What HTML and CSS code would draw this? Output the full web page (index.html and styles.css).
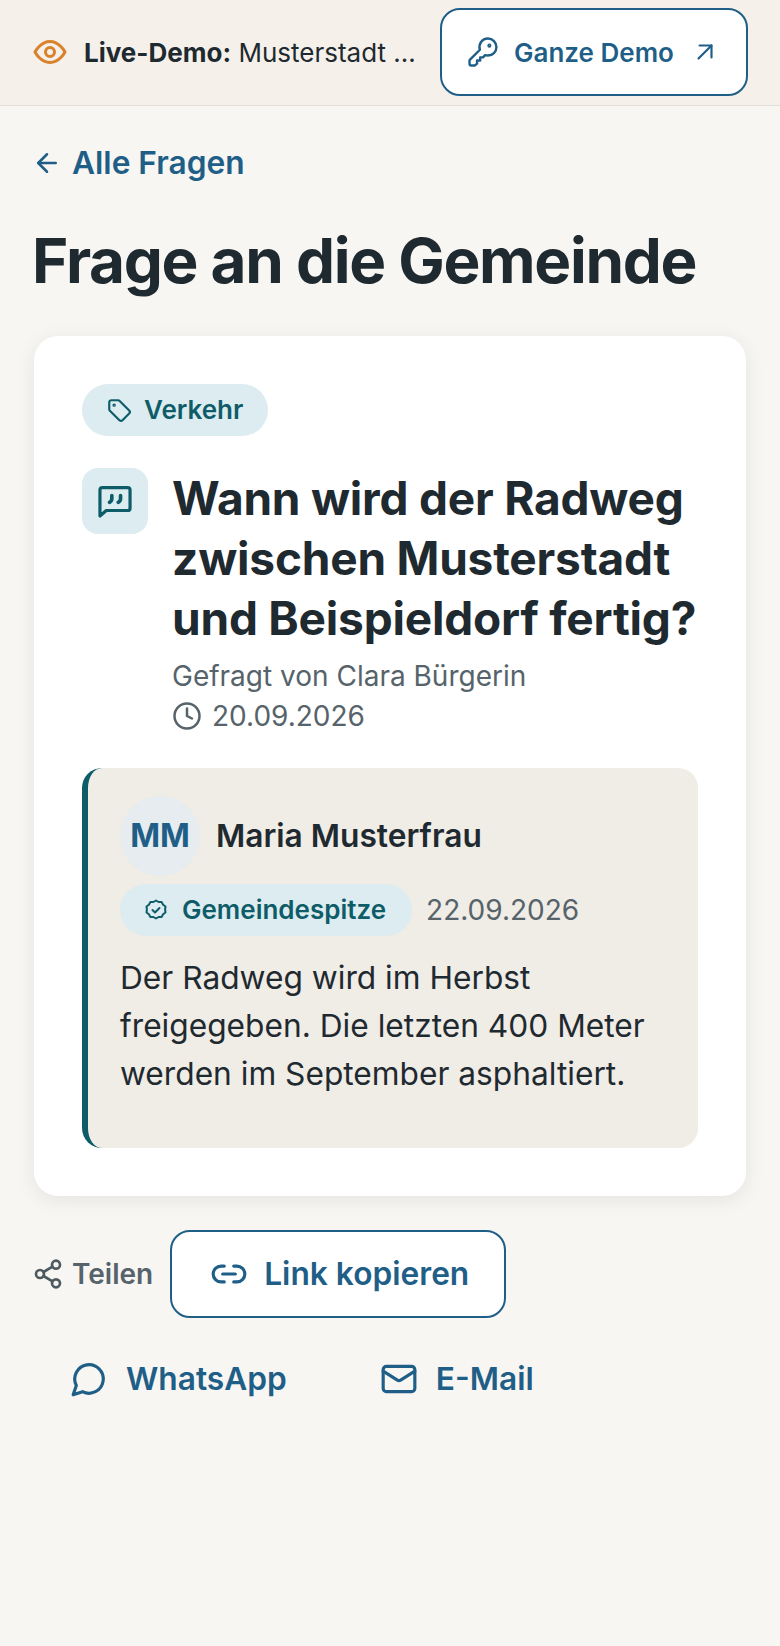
FILE: index.html
```html
<!DOCTYPE html>
<html lang="de">
<head>
    <meta charset="UTF-8">
    <meta name="viewport" content="width=device-width, initial-scale=1.0">
    <title>Frage an die Gemeinde</title>
    <link rel="stylesheet" href="styles.css">
</head>
<body>
    <div class="demo-bar">
        <div class="demo-info">
            <svg class="demo-eye" viewBox="0 0 24 24" fill="none" stroke="currentColor" stroke-width="2" stroke-linecap="round" stroke-linejoin="round">
                <path d="M2 12s3.600-7 10-7 10 7 10 7-3.600 7-10 7-10-7-10-7z"/>
                <circle cx="12" cy="12" r="3"/>
            </svg>
            <span class="demo-text"><strong>Live-Demo:</strong> Musterstadt ...</span>
        </div>
        <a class="btn demo-btn" href="#">
            <svg class="icon-key" viewBox="0 0 24 24" fill="none" stroke="currentColor" stroke-width="1.700" stroke-linecap="round" stroke-linejoin="round">
                <path d="M15.500 2.500a6 6 0 0 1 6 6c0 3.300-2.700 6-6 6-.7 0-1.400-.1-2-.3L12 15.800h-2v2.200H7.800v2.200L6.300 21.500H3.500a1 1 0 0 1-1-1v-2.800l7.300-7.300a6 6 0 0 1 5.700-7.900z"/>
                <circle cx="16.500" cy="7.500" r=".6"/>
            </svg>
            <span>Ganze Demo</span>
            <svg class="icon-out" viewBox="0 0 24 24" fill="none" stroke="currentColor" stroke-width="2" stroke-linecap="round" stroke-linejoin="round">
                <path d="M6 18 18 6"/>
                <path d="M7 6h11v11"/>
            </svg>
        </a>
    </div>

    <main class="page">
        <a class="back-link" href="#">
            <svg viewBox="0 0 24 24" fill="none" stroke="currentColor" stroke-width="2" stroke-linecap="round" stroke-linejoin="round">
                <path d="M19 12H5"/>
                <path d="m12 19-7-7 7-7"/>
            </svg>
            Alle Fragen
        </a>

        <h1>Frage an die Gemeinde</h1>

        <section class="card">
            <span class="chip chip-topic">
                <svg viewBox="0 0 24 24" fill="none" stroke="currentColor" stroke-width="2" stroke-linecap="round" stroke-linejoin="round">
                    <path d="M3 5v6.200c0 .5.2 1 .6 1.400l8.800 8.800c.8.8 2 .8 2.800 0l6.200-6.200c.8-.8.8-2 0-2.800l-8.800-8.800c-.4-.4-.9-.6-1.400-.6H5a2 2 0 0 0-2 2z"/>
                    <circle cx="7.500" cy="7.500" r=".6"/>
                </svg>
                Verkehr
            </span>

            <div class="question">
                <div class="question-icon">
                    <svg viewBox="0 0 24 24" fill="none" stroke="currentColor" stroke-width="2" stroke-linecap="round" stroke-linejoin="round">
                        <path d="M2.500 21.500V5a1.500 1.500 0 0 1 1.500-1.500h16A1.500 1.500 0 0 1 21.500 5v11.500a1.500 1.500 0 0 1-1.500 1.500H6.500z"/>
                        <path d="M10 8.500v2c0 1-.5 1.800-1.500 2.300" stroke-width="2.300"/>
                        <path d="M15.500 8.500v2c0 1-.5 1.800-1.500 2.300" stroke-width="2.300"/>
                    </svg>
                </div>
                <div class="question-body">
                    <h2>Wann wird der Radweg zwischen Musterstadt und Beispieldorf fertig?</h2>
                    <div class="question-meta">Gefragt von Clara Bürgerin</div>
                    <div class="question-meta question-date">
                        <svg viewBox="0 0 24 24" fill="none" stroke="currentColor" stroke-width="2" stroke-linecap="round" stroke-linejoin="round">
                            <circle cx="12" cy="12" r="10"/>
                            <path d="M12 6v6l4 2"/>
                        </svg>
                        20.09.2026
                    </div>
                </div>
            </div>

            <div class="answer">
                <div class="answer-head">
                    <div class="avatar">MM</div>
                    <div class="answer-name">Maria Musterfrau</div>
                </div>
                <div class="answer-role">
                    <span class="chip chip-role">
                        <svg viewBox="0 0 24 24" fill="none" stroke="currentColor" stroke-width="2" stroke-linecap="round" stroke-linejoin="round">
                            <path d="M12 2.500l2.600 1.500 3 .1 1.500 2.600 2.400 1.800-.4 3 .4 3-2.400 1.800-1.500 2.600-3 .1-2.600 1.500-2.600-1.500-3-.1-1.500-2.600-2.400-1.800.4-3-.4-3 2.400-1.800 1.500-2.600 3-.1z"/>
                            <path d="m8.500 12 2.500 2.500 4.500-4.500"/>
                        </svg>
                        Gemeindespitze
                    </span>
                    <span class="answer-date">22.09.2026</span>
                </div>
                <p>Der Radweg wird im Herbst freigegeben. Die letzten 400 Meter werden im September asphaltiert.</p>
            </div>
        </section>

        <div class="share-row">
            <span class="share-label">
                <svg viewBox="0 0 24 24" fill="none" stroke="currentColor" stroke-width="2" stroke-linecap="round" stroke-linejoin="round">
                    <circle cx="18" cy="5" r="3"/>
                    <circle cx="6" cy="12" r="3"/>
                    <circle cx="18" cy="19" r="3"/>
                    <path d="m8.600 13.500 6.800 4"/>
                    <path d="m15.400 6.500-6.800 4"/>
                </svg>
                Teilen
            </span>
            <a class="btn link-btn" href="#">
                <svg viewBox="0 0 24 24" fill="none" stroke="currentColor" stroke-width="2" stroke-linecap="round" stroke-linejoin="round">
                    <path d="M9 17H7A5 5 0 0 1 7 7h2"/>
                    <path d="M15 7h2a5 5 0 0 1 0 10h-2"/>
                    <path d="M8 12h8"/>
                </svg>
                Link kopieren
            </a>
        </div>

        <div class="share-links">
            <a class="share-link" href="#">
                <svg viewBox="0 0 24 24" fill="none" stroke="currentColor" stroke-width="2" stroke-linecap="round" stroke-linejoin="round">
                    <path d="M7.900 20A9 9 0 1 0 4 16.100L2 22z"/>
                </svg>
                WhatsApp
            </a>
            <a class="share-link" href="#">
                <svg viewBox="0 0 24 24" fill="none" stroke="currentColor" stroke-width="2" stroke-linecap="round" stroke-linejoin="round">
                    <rect x="2" y="4" width="20" height="16" rx="2"/>
                    <path d="m22 7-8.970 5.700a1.940 1.940 0 0 1-2.060 0L2 7"/>
                </svg>
                E-Mail
            </a>
        </div>
    </main>
</body>
</html>
```

FILE: styles.css
```css
* {
    box-sizing: border-box;
}
body {
    font-family: Inter, "Noto Sans", sans-serif;
    margin: 0;
    background-color: #f8f6f3;
    color: #1f2a30;
}
a {
    text-decoration: none;
    color: #1f5f87;
}
svg {
    flex-shrink: 0;
    display: block;
}
.demo-bar {
    display: flex;
    align-items: center;
    justify-content: space-between;
    height: 106px;
    padding: 8px 32px 9px 32px;
    background-color: #f5f0ea;
    border-bottom: 1px solid #e3e0da;
}
.demo-info {
    display: flex;
    align-items: center;
    gap: 16px;
}
.demo-eye {
    width: 36px;
    height: 36px;
    color: #d9822b;
}
.demo-text {
    font-size: 26px;
    white-space: nowrap;
}
.demo-text strong {
    font-weight: 700;
}
.btn {
    display: flex;
    align-items: center;
    background-color: #fff;
    border: 2px solid #1f5f87;
    border-radius: 20px;
    font-weight: 600;
    white-space: nowrap;
}
.demo-btn {
    width: 308px;
    height: 88px;
    padding: 0 28px 0 24px;
    font-size: 26px;
}
.icon-key {
    width: 34px;
    height: 34px;
    margin-right: 14px;
}
.icon-out {
    width: 26px;
    height: 26px;
    margin-left: auto;
}
.page {
    padding: 0 32px;
}
.back-link {
    display: flex;
    align-items: center;
    gap: 10px;
    margin-top: 38.5px;
    font-size: 31.7px;
    font-weight: 600;
    line-height: 36px;
}
.back-link svg {
    width: 30px;
    height: 30px;
}
h1 {
    margin: 45px 0 0 0;
    font-size: 62px;
    line-height: 70px;
    font-weight: 700;
    letter-spacing: -0.021em;
    color: #1f2a30;
}
.card {
    margin: 40px 2px 0 2px;
    height: 860px;
    padding: 48px;
    background-color: #fff;
    border-radius: 24px;
    box-shadow: 0 4px 20px rgba(0, 0, 0, 0.08);
}
.chip {
    display: inline-flex;
    align-items: center;
    border-radius: 26px;
    background-color: #dcecf0;
    color: #0f5c69;
    font-weight: 600;
}
.chip-topic {
    height: 52px;
    padding: 0 25px 0 24px;
    gap: 12px;
    font-size: 26px;
}
.chip-topic svg {
    width: 26px;
    height: 26px;
}
.question {
    display: flex;
    gap: 24px;
    margin-top: 32px;
}
.question-icon {
    display: flex;
    flex-shrink: 0;
    align-items: center;
    justify-content: center;
    width: 66px;
    height: 66px;
    border-radius: 16px;
    background-color: #dcecf0;
    color: #0f5c69;
}
.question-icon svg {
    width: 38px;
    height: 38px;
}
h2 {
    margin: 0 0 8px 0;
    font-size: 46px;
    line-height: 60px;
    font-weight: 700;
    letter-spacing: -0.2px;
    color: #1f2a30;
}
.question-meta {
    font-size: 28px;
    line-height: 40px;
    color: #56636a;
}
.question-date {
    display: flex;
    align-items: center;
    gap: 10px;
}
.question-date svg {
    width: 30px;
    height: 30px;
}
.answer {
    margin-top: 32px;
    height: 380px;
    padding: 28px 32px;
    background-color: #f0ece6;
    border-left: 6px solid #0f5c69;
    border-radius: 20px;
}
.answer-head {
    display: flex;
    align-items: center;
    gap: 16px;
}
.avatar {
    display: flex;
    align-items: center;
    justify-content: center;
    width: 80px;
    height: 80px;
    border-radius: 50%;
    background-color: #e6ecef;
    color: #1f5f87;
    font-size: 32px;
    font-weight: 700;
}
.answer-name {
    font-size: 31.7px;
    font-weight: 600;
}
.answer-role {
    display: flex;
    align-items: center;
    gap: 14px;
    margin-top: 8px;
}
.chip-role {
    height: 52px;
    padding: 0 26px 0 24px;
    gap: 14px;
    font-size: 26px;
}
.chip-role svg {
    width: 24px;
    height: 24px;
}
.answer-date {
    font-size: 28px;
    color: #56636a;
}
.answer p {
    margin: 18px 0 0 0;
    font-size: 31.7px;
    line-height: 48px;
    color: #1f2a30;
}
.share-row {
    display: flex;
    align-items: center;
    gap: 17px;
    margin-top: 34px;
}
.share-label {
    display: flex;
    align-items: center;
    gap: 8px;
    font-size: 28px;
    font-weight: 600;
    color: #56636a;
}
.share-label svg {
    width: 32px;
    height: 32px;
    color: #4d5a60;
}
.link-btn {
    gap: 16px;
    width: 336px;
    height: 88px;
    padding: 0 38px;
    font-size: 31.7px;
}
.link-btn svg {
    width: 38px;
    height: 38px;
}
.share-links {
    display: flex;
    gap: 93px;
    margin-top: 31px;
    padding-left: 38px;
}
.share-link {
    display: flex;
    align-items: center;
    gap: 18px;
    height: 60px;
    font-size: 31.7px;
    font-weight: 600;
}
.share-link svg {
    width: 38px;
    height: 38px;
}
```
